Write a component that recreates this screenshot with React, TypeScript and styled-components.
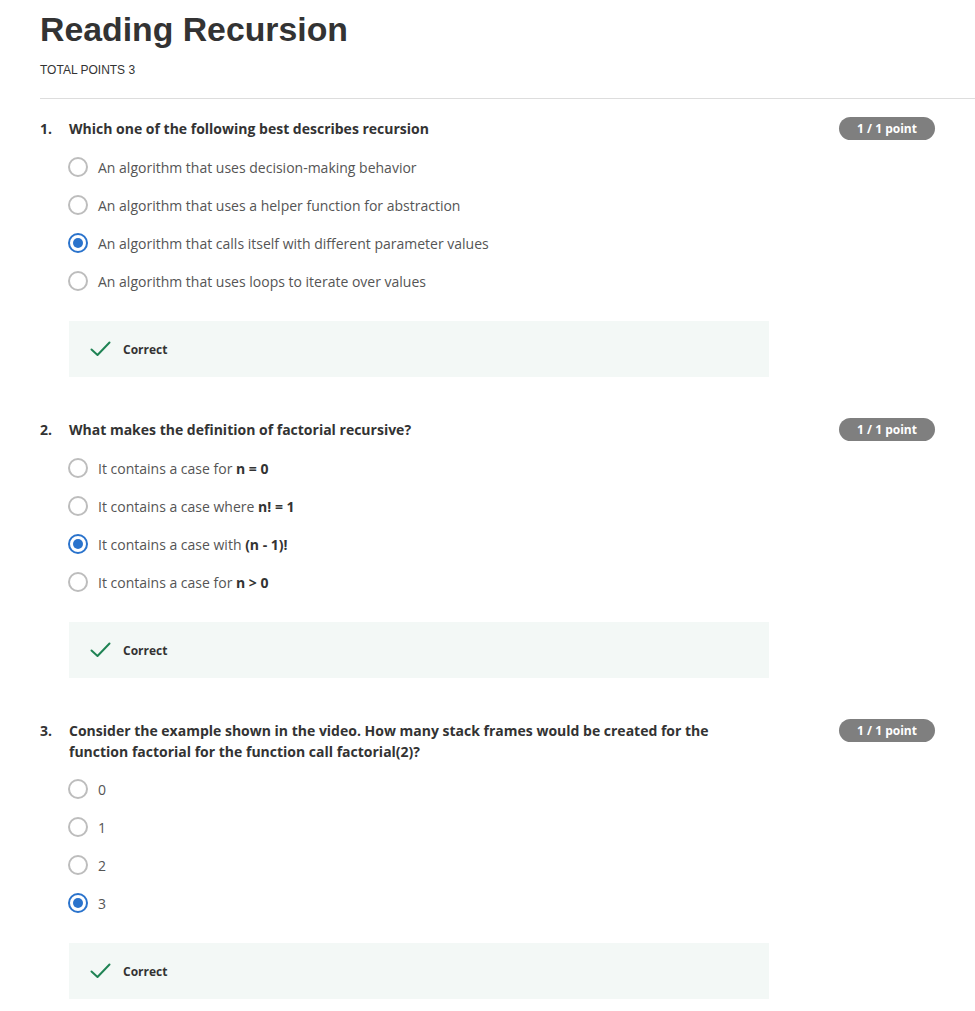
import React from "react";
import styled, { createGlobalStyle } from "styled-components";

const Global = createGlobalStyle`
  html, body { margin: 0; padding: 0; background: #ffffff; }
  body { font-family: "Open Sans", "Liberation Sans", Arial, sans-serif; }
`;

const Page = styled.div`
  padding: 0 0 0 40px;
  width: 975px;
  box-sizing: border-box;
`;

const Title = styled.h1`
  margin: 0;
  padding-top: 9px;
  font-family: "Liberation Sans", Arial, sans-serif;
  font-weight: 700;
  font-size: 33.8px;
  line-height: 40px;
  color: #333333;
`;

const Total = styled.div`
  margin-top: 14px;
  font-family: "Liberation Sans", Arial, sans-serif;
  font-size: 12px;
  line-height: 14px;
  color: #333333;
`;

const Divider = styled.hr`
  margin: 21px 0 0 0;
  border: 0;
  border-top: 1px solid #dddddd;
  height: 0;
`;

const List = styled.div`
  display: flex;
  flex-direction: column;
  gap: 42px;
  padding: 19px 40px 0 0;
`;

const Question = styled.section`
  display: flex;
  flex-direction: column;
`;

const Header = styled.div`
  display: flex;
  align-items: flex-start;
  justify-content: space-between;
`;

const Prompt = styled.div`
  display: flex;
  font-weight: 700;
  font-size: 14px;
  line-height: 21px;
  color: #333333;
`;

const Num = styled.span`
  width: 29px;
  flex: none;
`;

const PromptText = styled.span`
  max-width: 660px;
`;

const Badge = styled.span`
  flex: none;
  width: 96px;
  height: 23px;
  border-radius: 12px;
  background: #7f7f7f;
  color: #ffffff;
  font-weight: 700;
  font-size: 12px;
  line-height: 23px;
  text-align: center;
  margin-top: -1px;
`;

const Options = styled.div`
  display: flex;
  flex-direction: column;
  margin-top: 8px;
  padding-left: 28px;
`;

const Option = styled.label`
  display: flex;
  align-items: center;
  height: 38px;
  gap: 10px;
  font-size: 14px;
  color: #555555;
  b { color: #333333; font-weight: 700; }
`;

const Radio = styled.span<{ $on?: boolean }>`
  width: 20px;
  height: 20px;
  box-sizing: border-box;
  border-radius: 50%;
  border: 2px solid ${(p) => (p.$on ? "#2a73cc" : "#bdbdbd")};
  display: flex;
  align-items: center;
  justify-content: center;
  flex: none;
  &::after {
    content: "";
    display: ${(p) => (p.$on ? "block" : "none")};
    width: 10px;
    height: 10px;
    border-radius: 50%;
    background: #2a73cc;
  }
`;

const Feedback = styled.div`
  margin: 21px 0 0 29px;
  width: 700px;
  height: 56px;
  background: #f3f8f6;
  display: flex;
  align-items: center;
  padding-left: 21px;
  box-sizing: border-box;
  gap: 12px;
  font-weight: 700;
  font-size: 12px;
  color: #333333;
`;

const Check = () => (
  <svg width="21" height="16" viewBox="0 0 21 16" fill="none">
    <path d="M1.5 8.5 L7.5 14 L19.5 1.5" stroke="#1f8354" strokeWidth="2" strokeLinecap="round" strokeLinejoin="round" />
  </svg>
);

type Q = {
  n: number;
  prompt: string;
  options: React.ReactNode[];
  answer: number;
};

const questions: Q[] = [
  {
    n: 1,
    prompt: "Which one of the following best describes recursion",
    options: [
      "An algorithm that uses decision-making behavior",
      "An algorithm that uses a helper function for abstraction",
      "An algorithm that calls itself with different parameter values",
      "An algorithm that uses loops to iterate over values",
    ],
    answer: 2,
  },
  {
    n: 2,
    prompt: "What makes the definition of factorial recursive?",
    options: [
      <>It contains a case for <b>n = 0</b></>,
      <>It contains a case where <b>n! = 1</b></>,
      <>It contains a case with <b>(n - 1)!</b></>,
      <>It contains a case for <b>n &gt; 0</b></>,
    ],
    answer: 2,
  },
  {
    n: 3,
    prompt:
      "Consider the example shown in the video. How many stack frames would be created for the function factorial for the function call factorial(2)?",
    options: ["0", "1", "2", "3"],
    answer: 3,
  },
];

export default function App() {
  return (
    <>
      <Global />
      <Page>
        <Title>Reading Recursion</Title>
        <Total>TOTAL POINTS 3</Total>
        <Divider />
        <List>
          {questions.map((q) => (
            <Question key={q.n}>
              <Header>
                <Prompt>
                  <Num>{q.n}.</Num>
                  <PromptText>{q.prompt}</PromptText>
                </Prompt>
                <Badge>1 / 1 point</Badge>
              </Header>
              <Options>
                {q.options.map((o, i) => (
                  <Option key={i}>
                    <Radio $on={i === q.answer} />
                    <span>{o}</span>
                  </Option>
                ))}
              </Options>
              <Feedback>
                <Check />
                <span>Correct</span>
              </Feedback>
            </Question>
          ))}
        </List>
      </Page>
    </>
  );
}
